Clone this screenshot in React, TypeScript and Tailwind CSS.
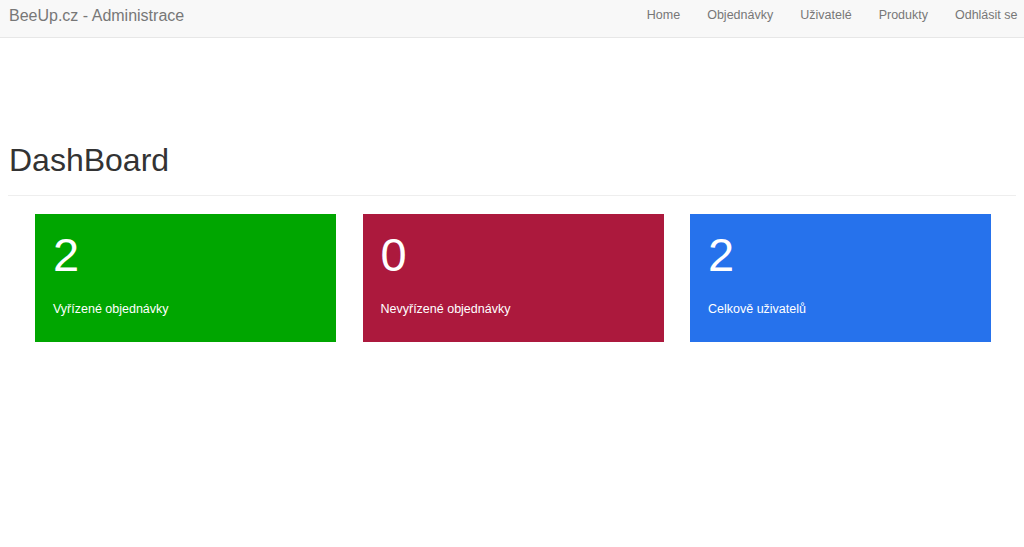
const stats = [
  { value: 2, label: "Vyřízené objednávky", color: "bg-[#00a600]" },
  { value: 0, label: "Nevyřízené objednávky", color: "bg-[#ac193d]" },
  { value: 2, label: "Celkově uživatelů", color: "bg-[#2672ec]" },
];

const links = ["Home", "Objednávky", "Uživatelé", "Produkty", "Odhlásit se"];

export default function App() {
  return (
    <div className="min-h-[547px] bg-white font-['Liberation_Sans',Arial,sans-serif] text-[#333]">
      <nav className="flex h-[38px] items-center justify-between overflow-hidden border-b border-[#e7e7e7] bg-[#f8f8f8] pb-[6px]">
        <a className="pl-[9px] text-[16px] text-[#777]">BeeUp.cz - Administrace</a>
        <ul className="-mr-[7px] flex items-center text-[12.5px] text-[#777]">
          {links.map((l) => (
            <li key={l} className="px-[13.5px]">
              {l}
            </li>
          ))}
        </ul>
      </nav>

      <div className="px-[8px]">
        <div className="mt-[105px] border-b border-[#eee] pb-[17px]">
          <h1 className="pl-[1px] text-[32px] leading-[35px]">DashBoard</h1>
        </div>

        <div className="mt-[18px] flex gap-[26.5px] pl-[27px]">
          {stats.map((s) => (
            <div key={s.label} className={`h-[128px] w-[301px] px-[18px] pt-[15px] text-white ${s.color}`}>
              <div className="text-[47px] leading-[52px]">{s.value}</div>
              <div className="mt-[19px] text-[12.5px]">{s.label}</div>
            </div>
          ))}
        </div>
      </div>
    </div>
  );
}
